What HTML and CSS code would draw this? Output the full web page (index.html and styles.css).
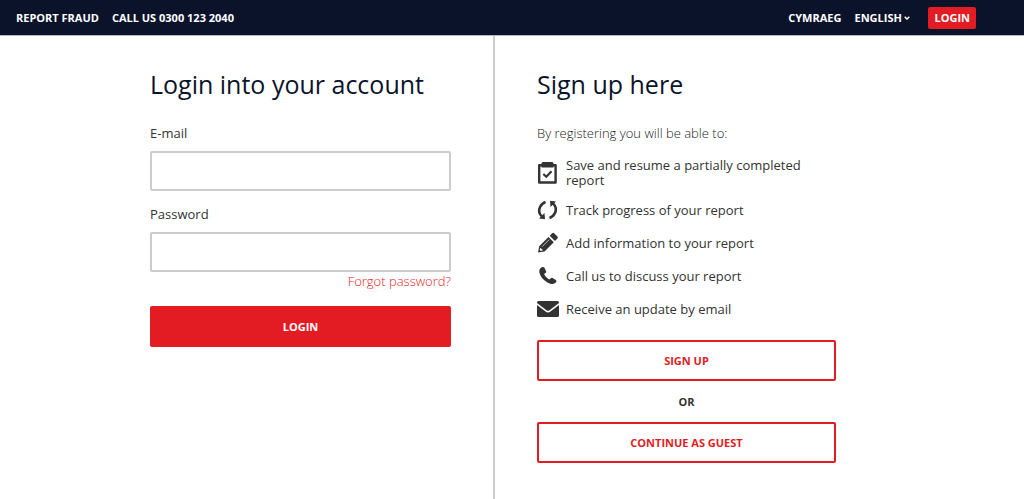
FILE: index.html
```html
<!DOCTYPE html>
<html lang="en">
<head>
<meta charset="utf-8">
<meta name="viewport" content="width=device-width, initial-scale=1">
<title>Login - Report Fraud</title>
<link rel="stylesheet" href="styles.css">
</head>
<body>
<header class="topbar">
  <nav class="topbar-group">
    <a href="#">REPORT FRAUD</a>
    <a href="tel:03001232040">CALL US 0300 123 2040</a>
  </nav>
  <nav class="topbar-group">
    <a href="#">CYMRAEG</a>
    <div class="language">
      <select class="language-select" aria-label="Language"><option>ENGLISH</option></select>
      <svg class="chevron" viewBox="0 0 6 4" aria-hidden="true"><path d="M.7.7 3 3 5.300.7" fill="none" stroke="currentColor" stroke-width="1.500"/></svg>
    </div>
    <a class="topbar-login" href="#">LOGIN</a>
  </nav>
</header>
<main class="columns">
  <section class="column column-login">
    <form class="panel">
      <h1 class="title">Login into your account</h1>
      <label class="label" for="email">E-mail</label>
      <input class="field" id="email" type="email">
      <label class="label" for="password">Password</label>
      <input class="field field-password" id="password" type="password">
      <a class="forgot" href="#">Forgot password?</a>
      <button class="button button-solid" type="submit">LOGIN</button>
    </form>
  </section>
  <section class="column column-signup">
    <div class="panel panel-signup">
      <h2 class="title">Sign up here</h2>
      <p class="intro">By registering you will be able to:</p>
      <ul class="benefits">
        <li class="benefit">
          <svg class="icon" viewBox="0 0 22 22" aria-hidden="true"><path d="M2.200 3.200h16.400v17.300H2.200z" fill="none" stroke="currentColor" stroke-width="2.400" stroke-linejoin="round"/><path d="M4.500 5.500V1.500q0-1.500 1.500-1.500h9q1.500 0 1.500 1.500v4z" fill="currentColor"/><path d="m6.300 12 3 2.800 5.200-5.500" fill="none" stroke="currentColor" stroke-width="2.200"/></svg>
          <span>Save and resume a partially completed report</span>
        </li>
        <li class="benefit">
          <svg class="icon" viewBox="0 0 22 22" aria-hidden="true"><path d="M8.500 3C3.600 4.700.700 10.500 3 15q.8 1.600 2.500 2.800M12.500 19c4.900-1.700 7.800-7.500 5.500-12q-.8-1.600-2.500-2.800" fill="none" stroke="currentColor" stroke-width="2.600"/><path d="M2 19.500 8 20.200 7.500 14zM19 2.500 13 1.800l.5 6.200z" fill="currentColor"/></svg>
          <span>Track progress of your report</span>
        </li>
        <li class="benefit">
          <svg class="icon" viewBox="0 0 22 22" aria-hidden="true"><path d="m1 20.500 1.200-6.300L11.500 4.900l5.300 5.300-9.300 9.300zM12.700 3.700l2.400-2.400q1.100-.9 2.100 0l3.200 3.200q1 1.100 0 2.100L18 9z" fill="currentColor"/><path d="m5.200 14.600 7-7" stroke="#fff" stroke-width=".7"/><path d="m3.400 15.700 2.600 2.600-2.500.6-.8-.8z" fill="#fff"/></svg>
          <span>Add information to your report</span>
        </li>
        <li class="benefit">
          <svg class="icon" viewBox="0 0 22 22" aria-hidden="true"><path d="M5.500 2Q7 1.700 7.600 3l1.500 3.200q.5 1.200-.6 1.800L7 8.900q1.500 3.500 5.200 5.700l1.700-1.400q.8-.6 1.700-.1l3.200 1.900q1.200.8.400 2-2.400 3-6.400 1.500C7.500 16.500 3.400 12.200 2.300 7Q2 3.200 5.500 2z" fill="currentColor"/></svg>
          <span>Call us to discuss your report</span>
        </li>
        <li class="benefit">
          <svg class="icon" viewBox="0 0 22 22" aria-hidden="true"><path d="M1.500 3h19Q22 3 22 4.500v.6l-9.500 7.200q-1.500 1.100-3 0L0 5.100v-.6Q0 3 1.500 3z" fill="currentColor"/><path d="m0 7 8.600 6.600q2.400 1.700 4.800 0L22 7v10.500q0 1.500-1.500 1.500h-19Q0 19 0 17.500z" fill="currentColor"/></svg>
          <span>Receive an update by email</span>
        </li>
      </ul>
      <button class="button button-outline" type="button">SIGN UP</button>
      <p class="or">OR</p>
      <button class="button button-outline" type="button">CONTINUE AS GUEST</button>
    </div>
  </section>
</main>
</body>
</html>
```
FILE: styles.css
```css
* {
  box-sizing: border-box;
}

body {
  display: flex;
  flex-direction: column;
  min-height: 100vh;
  margin: 0;
  background: #fff;
  color: #333;
  font: 500 13px/16px "Open Sans", sans-serif;
}

a {
  color: inherit;
  text-decoration: none;
}

.topbar {
  display: flex;
  justify-content: space-between;
  align-items: center;
  min-height: 36px;
  padding: 0 48px 0 16px;
  border-bottom: 1px solid #b5b7bd;
  background: #0b132b;
  color: #fff;
  font-size: 11px;
  font-weight: 700;
}

.topbar-group {
  display: flex;
  align-items: center;
  gap: 13px;
}

.language {
  display: flex;
  align-items: center;
  gap: 2px;
  margin-right: 5px;
}

.language-select {
  appearance: none;
  padding: 0;
  border: 0;
  background: transparent;
  color: inherit;
  font: inherit;
}

.chevron {
  width: 6px;
  height: 4px;
}

.topbar-login {
  padding: 3px 6px;
  border-radius: 2px;
  background: #e31b23;
}

.columns {
  display: grid;
  grid-template-columns: 1fr 1fr;
  flex: 1;
  padding-right: 34px;
}

.column {
  padding: 31px 42px;
}

.column-login {
  display: flex;
  justify-content: flex-end;
  border-right: 2px solid #ccc;
}

.panel {
  display: flex;
  flex-direction: column;
  width: 100%;
  max-width: 301px;
}

.panel-signup {
  max-width: 299px;
}

.title {
  margin: 0 0 24px;
  color: #0b132b;
  font-size: 25px;
  font-weight: 500;
  line-height: 34px;
}

.label {
  margin-bottom: 10px;
}

.field {
  width: 100%;
  height: 40px;
  margin-bottom: 15px;
  padding: 0 12px;
  border: 2px solid #ccc;
  border-radius: 2px;
  background: #fff;
  font: inherit;
}

.field-password {
  margin-bottom: 1px;
}

.forgot {
  align-self: flex-end;
  margin-bottom: 17px;
  color: #e31b23;
  font-weight: 300;
}

.button {
  width: 100%;
  height: 41px;
  border: 2px solid #e31b23;
  border-radius: 2px;
  font: 700 11px/16px "Open Sans", sans-serif;
}

.button-solid {
  background: #e31b23;
  color: #fff;
}

.button-outline {
  background: #fff;
  color: #e31b23;
}

.intro {
  margin: 0 0 17px;
  color: #222;
  font-weight: 300;
}

.benefits {
  display: flex;
  flex-direction: column;
  gap: 11px;
  margin: 0 0 20px;
  padding: 0;
  list-style: none;
  line-height: 15px;
}

.benefit {
  display: flex;
  align-items: center;
  gap: 7px;
}

.icon {
  flex: none;
  width: 22px;
  height: 22px;
}

.or {
  margin: 13px 0 12px;
  font-size: 11px;
  font-weight: 700;
  text-align: center;
}
```
